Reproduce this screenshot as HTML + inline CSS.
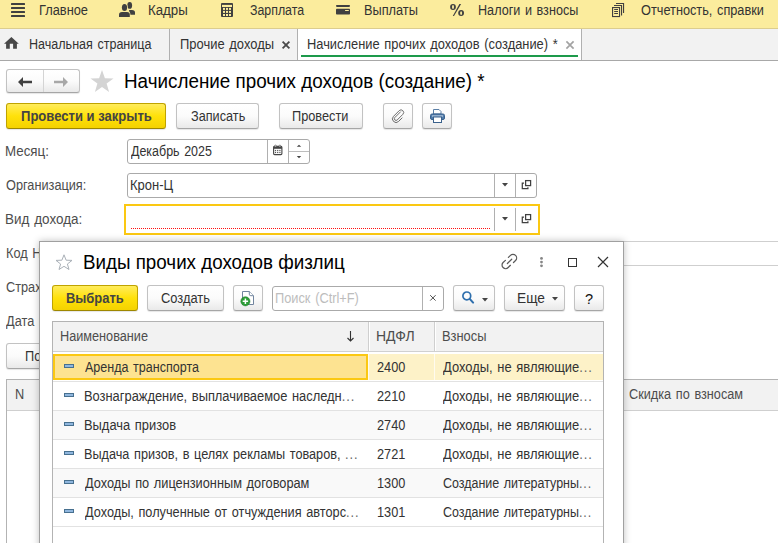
<!DOCTYPE html>
<html><head><meta charset="utf-8"><style>
*{box-sizing:border-box;margin:0;padding:0}
html,body{width:778px;height:543px;overflow:hidden;background:#fff;font-family:"Liberation Sans",sans-serif;font-size:14px;color:#333}
.a{position:absolute;white-space:nowrap}
svg.a{overflow:visible}
.t{position:absolute;white-space:nowrap;font-size:14px;line-height:16px;word-spacing:1.2px;transform:scaleX(.91);transform-origin:0 0}
.ttl{position:absolute;white-space:nowrap;font-size:20px;line-height:22px;transform:scaleX(.94);transform-origin:0 0}
.tb{position:absolute;white-space:nowrap;font-size:14px;line-height:16px;font-weight:bold;transform:scaleX(.93);transform-origin:0 0}
.btn{position:absolute;border:1px solid #c2c2c2;border-bottom-color:#a6a6a6;border-radius:3px;background:linear-gradient(#ffffff 0%,#fbfbfb 50%,#e9e9e9 100%);box-shadow:0 1px 1px rgba(0,0,0,.10)}
.ybtn{background:linear-gradient(#ffec5c 0%,#ffe10a 50%,#f4d200 100%);border-color:#bfa300;border-bottom-color:#9e8700}
.inp{position:absolute;border:1px solid #aaaaaa;border-radius:3px;background:#fff}
.vd{position:absolute;width:1px;background:#b0b0b0}
</style></head><body>
<div class="a" style="left:0;top:0;width:778px;height:28px;background:#fbec9d"></div>
<div class="a" style="left:0;top:28px;width:778px;height:1px;background:#dccd8e"></div>
<div class="a" style="left:0;top:29px;width:778px;height:31px;background:#f2f2f2"></div>
<div class="a" style="left:0;top:60px;width:778px;height:1px;background:#a8a8a8"></div>
<svg class="a" style="left:11px;top:3px" width="14" height="14" viewBox="0 0 14 14"><g fill="#404040"><rect x="0" y="0" width="14" height="2" rx="0.5"/><rect x="0" y="4" width="14" height="2" rx="0.5"/><rect x="0" y="8" width="14" height="2" rx="0.5"/><rect x="0" y="12" width="14" height="2" rx="0.5"/></g></svg>
<svg class="a" style="left:119px;top:2px" width="17" height="15" viewBox="0 0 17 15"><g fill="#404040"><ellipse cx="10.7" cy="3.4" rx="2.4" ry="3.4"/><path d="M10 8 L13 8 Q16 8 16 10.5 L16 12.7 L11 12.7Z"/></g><g fill="#fbec9d" stroke="#fbec9d" stroke-width="1.2"><ellipse cx="5.5" cy="5.4" rx="2.6" ry="3.5"/><path d="M0 15 L0 12.6 Q0 9.9 3 9.9 L8 9.9 Q10.8 9.9 10.8 12.6 L10.8 15Z"/></g><g fill="#404040"><ellipse cx="5.5" cy="5.4" rx="2.6" ry="3.5"/><path d="M0 15 L0 12.6 Q0 9.9 3 9.9 L8 9.9 Q10.8 9.9 10.8 12.6 L10.8 15Z"/></g></svg>
<svg class="a" style="left:221px;top:3px" width="12" height="14" viewBox="0 0 12 14"><rect x="0" y="0" width="12" height="14" rx="1" fill="#404040"/><rect x="1" y="1.9" width="10" height="2.1" fill="#fbec9d"/><g fill="#fbec9d"><rect x="2" y="4.9" width="2" height="2"/><rect x="5" y="4.9" width="2" height="2"/><rect x="8" y="4.9" width="2" height="2"/><rect x="2" y="7.9" width="2" height="2"/><rect x="5" y="7.9" width="2" height="2"/><rect x="8" y="7.9" width="2" height="2"/><rect x="2" y="11" width="2" height="2"/><rect x="5" y="11" width="2" height="2"/><rect x="8" y="11" width="2" height="2"/></g></svg>
<svg class="a" style="left:336px;top:5px" width="14" height="10" viewBox="0 0 14 10"><rect x="0" y="0" width="14" height="1.9" rx="0.8" fill="#404040"/><rect x="0" y="3.8" width="14" height="5.8" rx="0.8" fill="#404040"/><rect x="9" y="5.1" width="3.9" height="1" rx="0.4" fill="#fbec9d"/></svg>
<svg class="a" style="left:450px;top:4px" width="14" height="13" viewBox="0 0 14 13"><g fill="#404040"><ellipse cx="3" cy="3" rx="2.9" ry="3"/><ellipse cx="11.1" cy="9.1" rx="2.9" ry="3"/><path d="M9.4 0.1 L11.1 0.1 L4 12 L2.8 12Z"/></g><g fill="#fbec9d"><ellipse cx="3" cy="3" rx="1" ry="1.9"/><ellipse cx="11.1" cy="9.1" rx="1" ry="1.9"/></g></svg>
<svg class="a" style="left:612px;top:3px" width="13" height="14" viewBox="0 0 13 14"><g fill="none" stroke="#404040" stroke-width="1.1"><rect x="0.55" y="4.55" width="7" height="9"/><path d="M2 2.55 H9.55 V12.5"/><path d="M4 0.55 H11.55 V10"/><path d="M2.2 6.5 H6 M2.2 8.5 H6 M2.2 10.5 H6"/></g></svg>
<div class="t" style="left:39.09px;top:2px;color:#333;transform:scaleX(0.9158);">Главное</div>
<div class="t" style="left:147.96px;top:2px;color:#333;transform:scaleX(0.9469);">Кадры</div>
<div class="t" style="left:249.7px;top:2px;color:#333;transform:scaleX(0.8824);">Зарплата</div>
<div class="t" style="left:363.6px;top:2px;color:#333;transform:scaleX(0.9117);">Выплаты</div>
<div class="t" style="left:478.41px;top:2px;color:#333;transform:scaleX(0.9018);">Налоги и взносы</div>
<div class="t" style="left:640.7px;top:2px;color:#333;transform:scaleX(0.9100);">Отчетность, справки</div>
<svg class="a" style="left:4px;top:37px" width="15" height="12" viewBox="0 0 15 12"><path d="M7.4 0 L14.8 6.7 L0 6.7Z M2.1 6.5 H5.8 V11.8 H2.1Z M9.1 6.5 H12.9 V11.8 H9.1Z" fill="#484848"/></svg>
<div class="t" style="left:29.32px;top:36px;color:#333;transform:scaleX(0.8961);">Начальная страница</div>
<div class="t" style="left:179.78px;top:36px;color:#333;transform:scaleX(0.9250);">Прочие доходы</div>
<svg class="a" style="left:282px;top:41px" width="8" height="8" viewBox="0 0 8 8"><path d="M0.6 0.6 L7.4 7.4 M7.4 0.6 L0.6 7.4" stroke="#4a4a4a" stroke-width="1.8"/></svg>
<div class="a" style="left:298px;top:29px;width:283px;height:31px;background:#fff"></div>
<div class="t" style="left:307.49px;top:36px;color:#333;transform:scaleX(0.9192);">Начисление прочих доходов (создание) *</div>
<svg class="a" style="left:566px;top:41px" width="8" height="8" viewBox="0 0 8 8"><path d="M0.4 0.4 L7.6 7.6 M7.6 0.4 L0.4 7.6" stroke="#a3a3a3" stroke-width="1.7"/></svg>
<div class="a" style="left:169px;top:29px;width:1px;height:31px;background:#b0b0b0"></div>
<div class="a" style="left:297px;top:29px;width:1px;height:31px;background:#b0b0b0"></div>
<div class="a" style="left:581px;top:29px;width:1px;height:31px;background:#b0b0b0"></div>
<div class="a" style="left:301px;top:55px;width:277px;height:2px;background:#1d9a4b"></div>
<div class="btn" style="left:6px;top:69px;width:74px;height:24px"></div>
<div class="a" style="left:43px;top:70px;width:1px;height:22px;background:#d4d4d4"></div>
<svg class="a" style="left:18px;top:77px" width="14" height="10" viewBox="0 0 14 10"><path d="M0 5 L5 0 L5 3.8 L14 3.8 L14 6.2 L5 6.2 L5 10Z" fill="#404040"/></svg>
<svg class="a" style="left:54px;top:77px" width="14" height="10" viewBox="0 0 14 10"><path d="M14 5 L9 0 L9 3.8 L0 3.8 L0 6.2 L9 6.2 L9 10Z" fill="#a8a8a8"/></svg>
<svg class="a" style="left:90px;top:70px" width="24" height="22" viewBox="0 0 24 22"><path d="M12 0 L14.9 8.2 L23.5 8.4 L16.6 13.6 L19.1 22 L12 17 L4.9 22 L7.4 13.6 L0.5 8.4 L9.1 8.2Z" fill="#d4d4d4"/></svg>
<div class="ttl" style="left:123.87px;top:70px;color:#000;transform:scaleX(0.9417);">Начисление прочих доходов (создание) *</div>
<div class="btn ybtn" style="left:6px;top:103px;width:160px;height:26px"></div>
<div class="tb" style="left:20.8px;top:108px;color:#444;transform:scaleX(0.9320);">Провести и закрыть</div>
<div class="btn" style="left:176px;top:103px;width:83px;height:26px"></div>
<div class="t" style="left:190.6px;top:108px;color:#333;transform:scaleX(0.9066);">Записать</div>
<div class="btn" style="left:279px;top:103px;width:84px;height:26px"></div>
<div class="t" style="left:292.4px;top:108px;color:#333;transform:scaleX(0.9100);">Провести</div>
<div class="btn" style="left:383px;top:103px;width:30px;height:26px"></div>
<svg class="a" style="left:392px;top:109.5px" width="12.5" height="12.5" viewBox="0 0 14 14"><path d="M9.8 1.8 L3.2 8.4 A1.9 1.9 0 0 0 5.9 11.1 L12.2 4.8 A2.9 2.9 0 0 0 8.1 0.7 L1.7 7.1 A4 4 0 0 0 7.4 12.8 L11.6 8.6" fill="none" stroke="#6a6a6a" stroke-width="1.1"/></svg>
<div class="btn" style="left:422px;top:103px;width:30px;height:26px"></div>
<svg class="a" style="left:430px;top:109px" width="15" height="14" viewBox="0 0 15 14"><path d="M3.5 0.5 H9 L11 2.5 V5 H3.5Z" fill="#fff" stroke="#5b7fa6" stroke-width="1"/><rect x="0.5" y="5" width="14" height="5.5" rx="1.5" fill="#4f7bab" stroke="#3a618c" stroke-width="1"/><rect x="2" y="6.5" width="11" height="1" fill="#d8e4f0"/><rect x="3.5" y="8" width="8" height="5.5" fill="#fff" stroke="#3a618c" stroke-width="1"/></svg>
<div class="t" style="left:5.26px;top:143px;color:#4d4d4d;transform:scaleX(0.9510);">Месяц:</div>
<div class="t" style="left:6.3px;top:177px;color:#4d4d4d;transform:scaleX(0.9089);">Организация:</div>
<div class="t" style="left:5.24px;top:211px;color:#4d4d4d;transform:scaleX(0.9613);">Вид дохода:</div>
<div class="t" style="left:6px;top:245px;color:#4d4d4d;">Код НДФЛ:</div>
<div class="t" style="left:6px;top:279px;color:#4d4d4d;">Страховые взносы:</div>
<div class="t" style="left:6px;top:313px;color:#4d4d4d;">Дата выплаты:</div>
<div class="inp" style="left:127px;top:139px;width:183px;height:25px"></div>
<div class="vd" style="left:267px;top:140px;height:23px"></div>
<div class="vd" style="left:288px;top:140px;height:23px"></div>
<div class="a" style="left:289px;top:151px;width:20px;height:1px;background:#bdbdbd"></div>
<div class="t" style="left:131.2px;top:143px;color:#333;transform:scaleX(0.8903);">Декабрь 2025</div>
<svg class="a" style="left:273px;top:145px" width="10" height="10" viewBox="0 0 10 10"><rect x="0.6" y="1.2" width="8.3" height="8.4" rx="1" fill="#fff" stroke="#444" stroke-width="1.1"/><rect x="0.6" y="1.2" width="8.3" height="2.6" fill="#444"/><circle cx="2.5" cy="1" r="0.9" fill="#fff" stroke="#444" stroke-width="0.6"/><circle cx="6.9" cy="1" r="0.9" fill="#fff" stroke="#444" stroke-width="0.6"/><g fill="#555"><rect x="1.9" y="4.9" width="1.2" height="1.2"/><rect x="4.1" y="4.9" width="1.2" height="1.2"/><rect x="6.3" y="4.9" width="1.2" height="1.2"/><rect x="1.9" y="6.9" width="1.2" height="1.2"/><rect x="4.1" y="6.9" width="1.2" height="1.2"/><rect x="6.3" y="6.9" width="1.2" height="1.2"/></g></svg>
<svg class="a" style="left:296px;top:144px" width="6" height="16" viewBox="0 0 6 16"><path d="M0.8 2.8 L3 0.8 L5.2 2.8Z M0.8 12 L3 14.2 L5.2 12Z" fill="#444"/></svg>
<div class="inp" style="left:127px;top:173px;width:410px;height:25px"></div>
<div class="vd" style="left:494px;top:174px;height:23px"></div>
<div class="vd" style="left:515px;top:174px;height:23px"></div>
<div class="t" style="left:130.38px;top:177px;color:#333;transform:scaleX(0.9278);">Крон-Ц</div>
<svg class="a" style="left:502px;top:183px" width="6" height="4" viewBox="0 0 6 4"><path d="M0 0 H6 L3 3.5Z" fill="#444"/></svg>
<svg class="a" style="left:521px;top:180px" width="11" height="10" viewBox="0 0 11 10"><path d="M3 3.1 H1.3 V8.6 H6.9 V7.2" fill="none" stroke="#404040" stroke-width="1.25"/><rect x="4.6" y="0.6" width="5" height="5" fill="none" stroke="#404040" stroke-width="1.25"/></svg>
<div class="a" style="left:124px;top:204px;width:416px;height:31px;border:2px solid #fbc812;background:#fff"></div>
<div class="vd" style="left:494px;top:208px;height:23px"></div>
<div class="vd" style="left:515px;top:208px;height:23px"></div>
<div class="a" style="left:131px;top:228px;width:360px;height:1px;background:repeating-linear-gradient(90deg,#ff1010 0 1px,transparent 1px 2px)"></div>
<svg class="a" style="left:502px;top:217px" width="6" height="4" viewBox="0 0 6 4"><path d="M0 0 H6 L3 3.5Z" fill="#444"/></svg>
<svg class="a" style="left:521px;top:214px" width="11" height="10" viewBox="0 0 11 10"><path d="M3 3.1 H1.3 V8.6 H6.9 V7.2" fill="none" stroke="#404040" stroke-width="1.25"/><rect x="4.6" y="0.6" width="5" height="5" fill="none" stroke="#404040" stroke-width="1.25"/></svg>
<div class="a" style="left:127px;top:241px;width:700px;height:25px;border:1px solid #cfcfcf;border-radius:3px"></div>
<div class="btn" style="left:6px;top:343px;width:120px;height:26px"></div>
<div class="t" style="left:25px;top:348px;color:#333;">Подбор</div>
<div class="a" style="left:6px;top:379px;width:800px;height:200px;border:1px solid #b3b3b3;background:#fff"></div>
<div class="a" style="left:7px;top:380px;width:800px;height:31px;background:#f2f2f2;border-bottom:1px solid #cfcfcf"></div>
<div class="t" style="left:15px;top:386px;color:#4d4d4d;">N</div>
<div class="t" style="left:629.4px;top:386px;color:#4d4d4d;transform:scaleX(0.9084);">Скидка по взносам</div>
<div class="a" style="left:39px;top:241px;width:585px;height:330px;background:#fff;border:1px solid #a0a0a0;box-shadow:0 0 7px rgba(0,0,0,.25)"></div>
<svg class="a" style="left:55px;top:254px" width="18" height="16" viewBox="0 0 18 16"><path d="M9 0.8 L11.1 6.2 L17 6.4 L12.4 10 L14 15.5 L9 12.3 L4 15.5 L5.6 10 L1 6.4 L6.9 6.2Z" fill="none" stroke="#a9b0b7" stroke-width="1"/></svg>
<div class="ttl" style="left:83.37px;top:251px;color:#000;transform:scaleX(0.9391);">Виды прочих доходов физлиц</div>
<svg class="a" style="left:498px;top:250px" width="24" height="22" viewBox="0 0 24 22"><g fill="none" stroke="#5a5a5a" stroke-width="1.25" stroke-linecap="round"><path d="M10.4 7.4 L12.45 5.35 A3.6 3.6 0 0 1 17.55 10.45 L15.5 12.5"/><path d="M7.4 10.4 L5.1 12.45 A3.6 3.6 0 0 0 10.2 17.55 L12.4 15.3"/><path d="M9.4 13.5 L13.7 9.2"/></g></svg>
<svg class="a" style="left:539px;top:256px" width="5" height="12" viewBox="0 0 5 12"><g fill="#858585"><circle cx="2.5" cy="2.4" r="1.4"/><circle cx="2.5" cy="6.1" r="1.4"/><circle cx="2.5" cy="9.8" r="1.4"/></g></svg>
<div class="a" style="left:568px;top:258px;width:9px;height:9px;border:1.5px solid #333"></div>
<svg class="a" style="left:598px;top:257px" width="10" height="10" viewBox="0 0 10 10"><path d="M0 0 L10 10 M10 0 L0 10" stroke="#333" stroke-width="1.2"/></svg>
<div class="btn ybtn" style="left:52px;top:285px;width:86px;height:26px"></div>
<div class="tb" style="left:66.2px;top:290px;color:#444;transform:scaleX(0.9228);">Выбрать</div>
<div class="btn" style="left:147px;top:285px;width:77px;height:26px"></div>
<div class="t" style="left:161.3px;top:290px;color:#333;transform:scaleX(0.9195);">Создать</div>
<div class="btn" style="left:233px;top:285px;width:30px;height:26px"></div>
<svg class="a" style="left:232px;top:284px" width="32" height="28" viewBox="0 0 32 28"><path d="M10.5 7.5 H17.3 L21.5 11.7 V20.5 H10.5Z" fill="#fff" stroke="#71859f" stroke-width="1"/><path d="M17.3 7.5 V10.2 Q17.3 11.7 18.8 11.7 H21.5" fill="#fff" stroke="#71859f" stroke-width="1"/><circle cx="13.4" cy="17.3" r="4.6" fill="#2c9c37" stroke="#1d7d28" stroke-width="0.5"/><path d="M13.4 14.6 V20 M10.7 17.3 H16.1" stroke="#fff" stroke-width="1.5"/></svg>
<div class="inp" style="left:272px;top:286px;width:172px;height:25px"></div>
<div class="vd" style="left:422px;top:287px;height:23px"></div>
<div class="t" style="left:275.2px;top:290px;color:#bdbdbd;transform:scaleX(0.9144);">Поиск (Ctrl+F)</div>
<svg class="a" style="left:430px;top:295px" width="6" height="6" viewBox="0 0 6 6"><path d="M0.2 0.2 L5.6 5.6 M5.6 0.2 L0.2 5.6" stroke="#444" stroke-width="0.95"/></svg>
<div class="btn" style="left:453px;top:285px;width:42px;height:26px"></div>
<svg class="a" style="left:462px;top:291px" width="13" height="13" viewBox="0 0 13 13"><circle cx="4.8" cy="4.9" r="3.9" fill="none" stroke="#2f6fad" stroke-width="1.7"/><path d="M7.7 7.9 L11.1 11.6" stroke="#2f6fad" stroke-width="2.1" stroke-linecap="round"/></svg>
<svg class="a" style="left:482px;top:298px" width="6" height="4" viewBox="0 0 6 4"><path d="M0 0 H6 L3 3.5Z" fill="#444"/></svg>
<div class="btn" style="left:504px;top:285px;width:61px;height:26px"></div>
<div class="t" style="left:517.42px;top:290px;color:#333;transform:scaleX(0.9792);">Еще</div>
<svg class="a" style="left:552px;top:297px" width="6" height="4" viewBox="0 0 6 4"><path d="M0 0 H6 L3 3.5Z" fill="#444"/></svg>
<div class="btn" style="left:574px;top:285px;width:30px;height:26px"></div>
<div class="a" style="left:585px;top:291px;font-size:14.5px;line-height:16px;color:#111">?</div>
<div class="a" style="left:52px;top:321px;width:552px;height:250px;border:1px solid #b3b3b3;background:#fff"></div>
<div class="a" style="left:53px;top:322px;width:550px;height:30px;background:#f2f2f2;border-bottom:1px solid #d0d0d0"></div>
<div class="a" style="left:368px;top:322px;width:1px;height:29px;background:#cfcfcf;border-right:1px solid #fff;box-sizing:content-box"></div>
<div class="a" style="left:434px;top:322px;width:1px;height:29px;background:#cfcfcf;border-right:1px solid #fff;box-sizing:content-box"></div>
<div class="t" style="left:60.4px;top:328px;color:#4d4d4d;transform:scaleX(0.9069);">Наименование</div>
<svg class="a" style="left:347px;top:331px" width="7" height="11" viewBox="0 0 7 11"><path d="M3.5 0 V10 M0.5 7 L3.5 10 L6.5 7" fill="none" stroke="#333" stroke-width="1.1"/></svg>
<div class="t" style="left:376.4px;top:328px;color:#4d4d4d;transform:scaleX(0.9983);">НДФЛ</div>
<div class="t" style="left:442.49px;top:328px;color:#4d4d4d;transform:scaleX(0.9206);">Взносы</div>
<div class="a" style="left:53px;top:353px;width:550px;height:29px;background:#fff;border-bottom:1px solid #e2e2e2"></div>
<div class="a" style="left:53px;top:354px;width:550px;height:26px;background:#fdf2c8"></div>
<div class="a" style="left:53px;top:354px;width:315px;height:26px;border:2px solid #fbc812;background:#fde391"></div>
<div class="a" style="left:368px;top:354px;width:1px;height:26px;background:#fffbef"></div>
<div class="a" style="left:434px;top:354px;width:1px;height:26px;background:#fffbef"></div>
<div class="a" style="left:64px;top:364px;width:10px;height:4px;background:#8fb6de;border:1px solid #47708f"></div>
<div class="t" style="left:85.1px;top:359px;color:#333;transform:scaleX(0.8959);">Аренда транспорта</div>
<div class="t" style="left:377px;top:359px;color:#333;">2400</div>
<div class="t" style="left:443.3px;top:359px;color:#333;transform:scaleX(0.9237);">Доходы, не являющие<span style="color:#666;letter-spacing:1px">...</span></div>
<div class="a" style="left:53px;top:382px;width:550px;height:29px;background:#fff;border-bottom:1px solid #e2e2e2"></div>
<div class="a" style="left:64px;top:393px;width:10px;height:4px;background:#8fb6de;border:1px solid #47708f"></div>
<div class="t" style="left:84.09px;top:388px;color:#333;transform:scaleX(0.9196);">Вознаграждение, выплачиваемое наследн<span style="color:#666;letter-spacing:1px">...</span></div>
<div class="t" style="left:377px;top:388px;color:#333;">2210</div>
<div class="t" style="left:443.3px;top:388px;color:#333;transform:scaleX(0.9237);">Доходы, не являющие<span style="color:#666;letter-spacing:1px">...</span></div>
<div class="a" style="left:53px;top:411px;width:550px;height:29px;background:#f9f9f9;border-bottom:1px solid #e2e2e2"></div>
<div class="a" style="left:64px;top:422px;width:10px;height:4px;background:#8fb6de;border:1px solid #47708f"></div>
<div class="t" style="left:84.09px;top:417px;color:#333;transform:scaleX(0.9211);">Выдача призов</div>
<div class="t" style="left:377px;top:417px;color:#333;">2740</div>
<div class="t" style="left:443.3px;top:417px;color:#333;transform:scaleX(0.9237);">Доходы, не являющие<span style="color:#666;letter-spacing:1px">...</span></div>
<div class="a" style="left:53px;top:440px;width:550px;height:29px;background:#fff;border-bottom:1px solid #e2e2e2"></div>
<div class="a" style="left:64px;top:451px;width:10px;height:4px;background:#8fb6de;border:1px solid #47708f"></div>
<div class="t" style="left:84.1px;top:446px;color:#333;transform:scaleX(0.9063);">Выдача призов, в целях рекламы товаров, <span style="color:#666;letter-spacing:1px">...</span></div>
<div class="t" style="left:377px;top:446px;color:#333;">2721</div>
<div class="t" style="left:443.3px;top:446px;color:#333;transform:scaleX(0.9237);">Доходы, не являющие<span style="color:#666;letter-spacing:1px">...</span></div>
<div class="a" style="left:53px;top:469px;width:550px;height:29px;background:#f9f9f9;border-bottom:1px solid #e2e2e2"></div>
<div class="a" style="left:64px;top:480px;width:10px;height:4px;background:#8fb6de;border:1px solid #47708f"></div>
<div class="t" style="left:85.1px;top:475px;color:#333;transform:scaleX(0.9129);">Доходы по лицензионным договорам</div>
<div class="t" style="left:377px;top:475px;color:#333;">1300</div>
<div class="t" style="left:443.3px;top:475px;color:#333;transform:scaleX(0.8913);">Создание литературны<span style="color:#666;letter-spacing:1px">...</span></div>
<div class="a" style="left:53px;top:498px;width:550px;height:29px;background:#fff;border-bottom:1px solid #e2e2e2"></div>
<div class="a" style="left:64px;top:509px;width:10px;height:4px;background:#8fb6de;border:1px solid #47708f"></div>
<div class="t" style="left:85.1px;top:504px;color:#333;transform:scaleX(0.9090);">Доходы, полученные от отчуждения авторс<span style="color:#666;letter-spacing:1px">...</span></div>
<div class="t" style="left:377px;top:504px;color:#333;">1301</div>
<div class="t" style="left:443.3px;top:504px;color:#333;transform:scaleX(0.8913);">Создание литературны<span style="color:#666;letter-spacing:1px">...</span></div>
</body></html>
